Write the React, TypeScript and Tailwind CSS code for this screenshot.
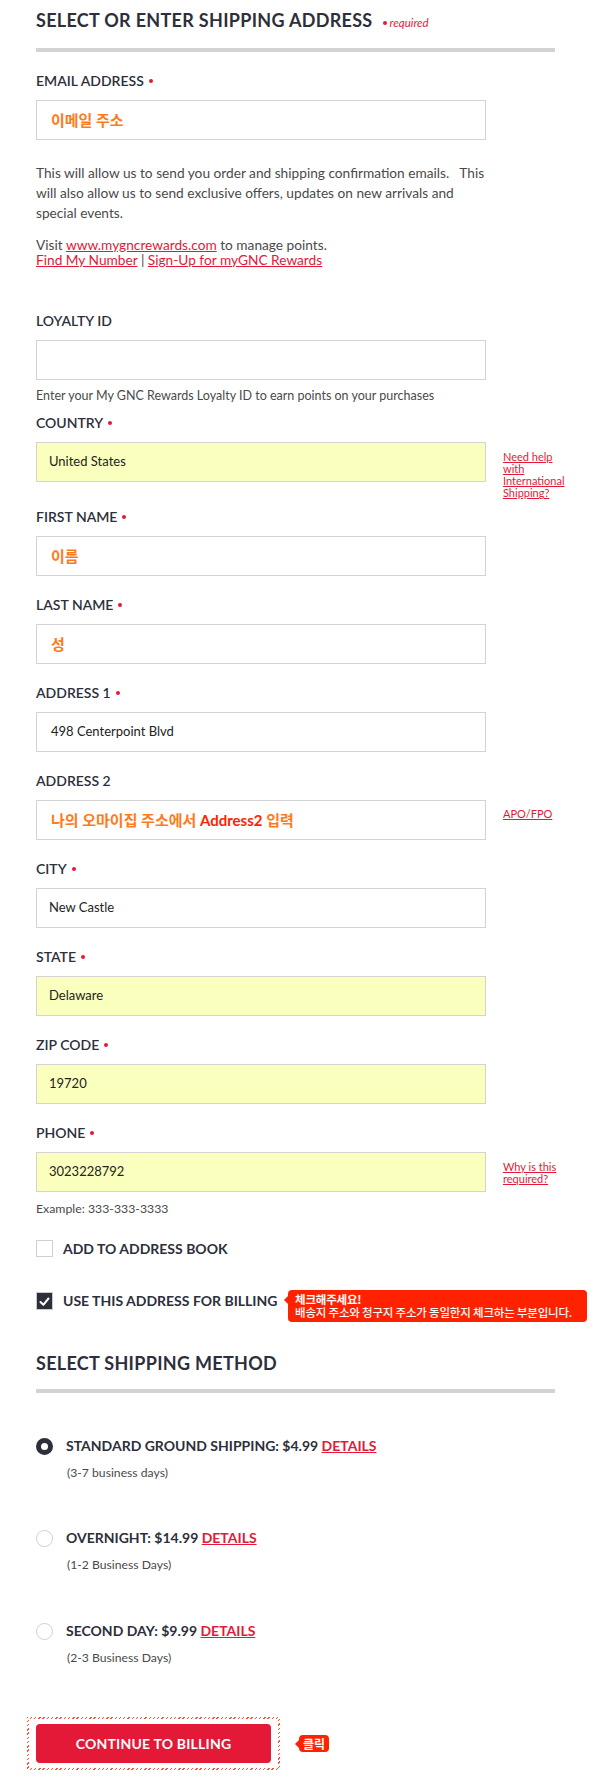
import React from "react";

function Dot({ className = "" }: { className?: string }) {
  return (
    <span
      className={`inline-block w-[4px] h-[4px] rounded-full bg-[#e31937] align-middle relative top-[-1px] ${className}`}
    />
  );
}

function Label({ children, req }: { children: React.ReactNode; req?: boolean }) {
  return (
    <div className="text-[14px] leading-[18px] font-semibold text-[#2d2f3b] mb-[10px]">
      {children}
      {req && <Dot className="ml-[5px]" />}
    </div>
  );
}

function Box({ children, yellow }: { children?: React.ReactNode; yellow?: boolean }) {
  return (
    <div
      className={
        yellow
          ? "h-[40px] w-[450px] shrink-0 border border-[#d3d3d3] bg-[#faffbd] flex items-center"
          : "h-[40px] w-[450px] shrink-0 border border-[#d3d3d3] bg-white flex items-center"
      }
    >
      {children}
    </div>
  );
}

function Val({ children }: { children: React.ReactNode }) {
  return <span className="pl-[12px] text-[13px] text-[#222222]">{children}</span>;
}

function Orange({ children }: { children: React.ReactNode }) {
  return <span className="pl-[14px] text-[15px] font-bold text-[#ff7a1a]">{children}</span>;
}

function SideLink({ children, pt }: { children: React.ReactNode; pt: string }) {
  return (
    <div className={`ml-[17px] ${pt} text-[11px] leading-[12px] text-[#e31937] underline`}>
      {children}
    </div>
  );
}

function Radio({ selected }: { selected?: boolean }) {
  return selected ? (
    <span className="w-[17px] h-[17px] rounded-full border-[5px] border-[#2d2f3a] bg-white shrink-0" />
  ) : (
    <span className="w-[17px] h-[17px] rounded-full border border-[#d0d0d0] bg-white shrink-0" />
  );
}

function Ship({
  title,
  sub,
  selected,
  mt,
}: {
  title: string;
  sub: string;
  selected?: boolean;
  mt: string;
}) {
  return (
    <div className={mt}>
      <div className="flex items-center h-[20px]">
        <Radio selected={selected} />
        <span className="ml-[13px] text-[14px] leading-[20px] font-bold text-[#2d2f3b]">
          {title} <span className="text-[#e31937] underline">DETAILS</span>
        </span>
      </div>
      <div className="mt-[9px] pl-[31px] text-[12.2px] leading-[16px] text-[#4a4a4a]">{sub}</div>
    </div>
  );
}

export default function App() {
  return (
    <div className="w-[600px] min-h-[1783px] bg-white font-['Lato','Noto_Sans_CJK_KR',sans-serif] text-[#2d2f3b]">
      <div className="pl-[36px] pt-[8px] pb-[12px]">
        {/* Heading */}
        <div className="flex items-baseline">
          <h1 className="text-[18px] leading-[24px] font-bold tracking-[0.3px] text-[#2d2f3b]">
            SELECT OR ENTER SHIPPING ADDRESS
          </h1>
          <span className="ml-[10px] text-[11.5px] italic text-[#e31937]">
            <Dot className="mr-[3px]" />
            required
          </span>
        </div>
        <div className="mt-[16px] h-[4px] w-[519px] bg-[#d3d3d3]" />

        {/* Email */}
        <div className="mt-[20px]">
          <Label req>EMAIL ADDRESS</Label>
          <Box>
            <Orange>이메일 주소</Orange>
          </Box>
        </div>

        <p className="mt-[23px] text-[13.7px] leading-[20px] text-[#4a4a4a]">
          This will allow us to send you order and shipping confirmation emails.{"\u00a0\u00a0 "}This
          <br />
          will also allow us to send exclusive offers, updates on new arrivals and
          <br />
          special events.
        </p>
        <p className="mt-[14px] text-[13.7px] leading-[15px] text-[#4a4a4a]">
          Visit <span className="text-[#e31937] underline">www.mygncrewards.com</span> to manage points.
          <br />
          <span className="text-[#e31937] underline">Find My Number</span> |{" "}
          <span className="text-[#e31937] underline">Sign-Up for myGNC Rewards</span>
        </p>

        {/* Loyalty */}
        <div className="mt-[45px]">
          <Label>LOYALTY ID</Label>
          <Box />
        </div>
        <div className="mt-[8px] text-[12.5px] leading-[16px] text-[#4a4a4a]">
          Enter your My GNC Rewards Loyalty ID to earn points on your purchases
        </div>

        {/* Country */}
        <div className="mt-[10px]">
          <Label req>COUNTRY</Label>
          <div className="flex items-start">
            <Box yellow>
              <Val>United States</Val>
            </Box>
            <SideLink pt="pt-[9px]">
              Need help
              <br />
              with
              <br />
              International
              <br />
              Shipping?
            </SideLink>
          </div>
        </div>

        <div className="mt-[9px]">
          <Label req>FIRST NAME</Label>
          <Box>
            <Orange>이름</Orange>
          </Box>
        </div>

        <div className="mt-[20px]">
          <Label req>LAST NAME</Label>
          <Box>
            <Orange>성</Orange>
          </Box>
        </div>

        <div className="mt-[20px]">
          <Label req>ADDRESS 1</Label>
          <Box>
            <span className="pl-[14px] text-[13px] text-[#222222]">498 Centerpoint Blvd</span>
          </Box>
        </div>

        <div className="mt-[20px]">
          <Label>ADDRESS 2</Label>
          <div className="flex items-start">
            <Box>
              <span className="pl-[14px] text-[15px] font-bold text-[#ff7a1a]">
                나의 오마이집 주소에서 <span className="text-[#ff2200]">Address2</span> 입력
              </span>
            </Box>
            <SideLink pt="pt-[8px]">APO/FPO</SideLink>
          </div>
        </div>

        <div className="mt-[20px]">
          <Label req>CITY</Label>
          <Box>
            <Val>New Castle</Val>
          </Box>
        </div>

        <div className="mt-[20px]">
          <Label req>STATE</Label>
          <Box yellow>
            <Val>Delaware</Val>
          </Box>
        </div>

        <div className="mt-[20px]">
          <Label req>ZIP CODE</Label>
          <Box yellow>
            <Val>19720</Val>
          </Box>
        </div>

        <div className="mt-[20px]">
          <Label req>PHONE</Label>
          <div className="flex items-start">
            <Box yellow>
              <Val>3023228792</Val>
            </Box>
            <SideLink pt="pt-[9px]">
              Why is this
              <br />
              required?
            </SideLink>
          </div>
        </div>
        <div className="mt-[9px] text-[12.3px] leading-[16px] text-[#4a4a4a]">Example: 333-333-3333</div>

        {/* Checkboxes */}
        <div className="mt-[23px] flex items-center h-[17px]">
          <span className="w-[17px] h-[17px] border border-[#d0d0d0] bg-white shrink-0" />
          <span className="ml-[10px] text-[14px] leading-[18px] font-bold text-[#2d2f3b]">
            ADD TO ADDRESS BOOK
          </span>
        </div>

        <div className="mt-[35px] relative flex items-center h-[18px]">
          <span className="w-[17px] h-[18px] bg-[#2d2f3a] border border-[#c9c9c9] shrink-0 flex items-center justify-center">
            <svg width="13" height="13" viewBox="0 0 13 13">
              <polyline
                points="2.5,7 5.3,9.8 10.5,3.5"
                fill="none"
                stroke="#ffffff"
                strokeWidth="2"
                strokeLinecap="round"
                strokeLinejoin="round"
              />
            </svg>
          </span>
          <span className="ml-[10px] text-[14px] leading-[18px] font-bold text-[#2d2f3b]">
            USE THIS ADDRESS FOR BILLING
          </span>
          <div className="absolute left-[252px] top-[-2px] w-[299px] h-[32px] bg-[#ff2200] rounded-[4px] px-[7px] py-[3px] text-white text-[11.5px] leading-[13px] tracking-[-0.2px] font-['Noto_Sans_CJK_KR','Lato',sans-serif]">
            <span className="absolute left-[-4px] top-[6px] w-0 h-0 border-y-[4px] border-y-transparent border-r-[4px] border-r-[#ff2200]" />
            <div className="font-bold">체크해주세요!</div>
            <div className="font-medium">배송지 주소와 청구지 주소가 동일한지 체크하는 부분입니다.</div>
          </div>
        </div>

        {/* Shipping method */}
        <h2 className="mt-[41px] text-[18px] leading-[24px] font-bold tracking-[0.3px] text-[#2d2f3b]">
          SELECT SHIPPING METHOD
        </h2>
        <div className="mt-[14px] h-[4px] w-[519px] bg-[#d3d3d3]" />

        <Ship mt="mt-[43px]" selected title="STANDARD GROUND SHIPPING: $4.99" sub="(3-7 business days)" />
        <Ship mt="mt-[47px]" title="OVERNIGHT: $14.99" sub="(1-2 Business Days)" />
        <Ship mt="mt-[48px]" title="SECOND DAY: $9.99" sub="(2-3 Business Days)" />

        {/* Continue */}
        <div className="mt-[51px] flex items-center">
          <div className="-ml-[9px] p-[2px] bg-[repeating-linear-gradient(135deg,#ff4d2e_0px,#ff4d2e_1px,#ffffff_1px,#ffffff_3px)]">
            <div className="bg-white py-[5px] px-[7px]">
              <div className="w-[235px] h-[39px] rounded-[4px] bg-[#e31937] text-white font-bold text-[14px] tracking-[0.2px] flex items-center justify-center">
                CONTINUE TO BILLING
              </div>
            </div>
          </div>
          <div className="ml-[19px] relative bg-[#ff2200] text-white text-[12px] font-bold rounded-[4px] h-[17px] leading-[17px] px-[4px] font-['Noto_Sans_CJK_KR',sans-serif]">
            <span className="absolute left-[-4px] top-[4.5px] w-0 h-0 border-y-[4px] border-y-transparent border-r-[4px] border-r-[#ff2200]" />
            클릭
          </div>
        </div>
      </div>
    </div>
  );
}
